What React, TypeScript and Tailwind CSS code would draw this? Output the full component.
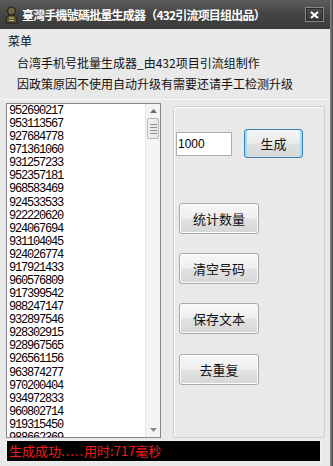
const numbers = [
  "952690217", "953113567", "927684778", "971361060", "931257233",
  "952357181", "968583469", "924533533", "922220620", "924067694",
  "931104045", "924026774", "917921433", "960576809", "917399542",
  "988247147", "932897546", "928302915", "928967565", "926561156",
  "963874277", "970200404", "934972833", "960802714", "919315450",
  "988662369",
];

const cjk = { fontFamily: '"Noto Sans CJK SC", "Liberation Sans", sans-serif' };

function WinButton({ label, top }: { label: string; top: string }) {
  return (
    <button
      className={`${top} ml-[5px] flex h-[31px] w-[80px] items-center justify-center rounded-[3px] border border-[#a9a9a9] bg-[linear-gradient(#f7f7f7_0%,#efefef_48%,#e2e2e2_52%,#d6d6d6_100%)] text-[13px] text-[#111] shadow-[inset_0_0_0_1px_#fcfcfc]`}
      style={cjk}
    >
      {label}
    </button>
  );
}

export default function App() {
  return (
    <div className="flex h-[466px] w-[333px] overflow-hidden bg-[#e9e9e9]">
      <div className="flex w-[330px] flex-col">
        {/* title bar */}
        <div className="flex h-[29px] items-center bg-[linear-gradient(#5c5c5c,#444_50%,#3a3a3a)] pl-[4px] pr-[6px]">
          <svg width="15" height="18" viewBox="0 0 15 18" className="shrink-0">
            <ellipse cx="7.5" cy="5" rx="4" ry="4" fill="#6b6440" stroke="#1e1c10" strokeWidth="1" />
            <path d="M2 17 C2 10 4 9 7.5 9 C11 9 13 10 13 17 Z" fill="#5d5636" stroke="#1e1c10" strokeWidth="1" />
            <path d="M5 12 L10 12 M5 14.5 L10 14.5" stroke="#c9c08a" strokeWidth="1" />
          </svg>
          <span className="ml-[3px] whitespace-nowrap text-[12px] font-bold tracking-[-0.8px] text-white" style={cjk}>
            臺灣手機號碼批量生成器（432引流项目组出品）
          </span>
          <div className="ml-auto flex h-[15px] w-[19px] items-center justify-center border border-[#888] bg-[linear-gradient(#4e4e4e,#363636)] shadow-[inset_0_0_0_1px_#2a2a2a]">
            <svg width="9" height="8" viewBox="0 0 9 8">
              <path d="M1 1 L8 7 M8 1 L1 7" stroke="#fff" strokeWidth="2" />
            </svg>
          </div>
        </div>

        {/* menu + info lines */}
        <div className="flex h-[70px] flex-col text-[12px] leading-[12px] text-[#111]" style={cjk}>
          <div className="ml-[8px] mt-[6px]">菜单</div>
          <div className="ml-[17px] mt-[10px]">台湾手机号批量生成器_由432项目引流组制作</div>
          <div className="ml-[17px] mt-[9px]">因政策原因不使用自动升级有需要还请手工检测升级</div>
        </div>
        <div className="h-px bg-[#f7f7f7]" />

        {/* main area */}
        <div className="mt-[3px] flex h-[336px]">
          {/* list box */}
          <div className="ml-[6px] flex h-[335px] w-[155px] border border-[#828790] bg-white">
            <div
              className="h-full flex-1 overflow-hidden pl-[2px] pt-[1px] text-[12px] leading-[13.08px] tracking-[-1.2px] text-black"
              style={{ fontFamily: '"Liberation Mono", "DejaVu Sans Mono", monospace' }}
            >
              {numbers.map((n, i) => (
                <div key={i}>{n}</div>
              ))}
            </div>
            {/* scrollbar */}
            <div className="flex w-[15px] flex-col border-l border-[#e6e6e6] bg-[#f4f4f4]">
              <div className="flex h-[14px] items-center justify-center">
                <svg width="7" height="4" viewBox="0 0 7 4">
                  <path d="M0 4 L3.5 0 L7 4 Z" fill="#6a6a6a" />
                </svg>
              </div>
              <div className="mx-[1px] flex h-[21px] flex-col items-center justify-center gap-[2px] rounded-[2px] border border-[#b8b8b8] bg-[linear-gradient(90deg,#f3f3f3,#e3e3e3)]">
                <div className="h-px w-[7px] bg-[#8f8f8f]" />
                <div className="h-px w-[7px] bg-[#8f8f8f]" />
                <div className="h-px w-[7px] bg-[#8f8f8f]" />
                <div className="h-px w-[7px] bg-[#8f8f8f]" />
              </div>
              <div className="mt-auto flex h-[14px] items-center justify-center">
                <svg width="7" height="4" viewBox="0 0 7 4">
                  <path d="M0 0 L3.5 4 L7 0 Z" fill="#8a8a8a" />
                </svg>
              </div>
            </div>
          </div>

          {/* group box */}
          <div className="ml-[12px] mt-[3px] flex h-[332px] w-[152px] flex-col rounded-[2px] border border-[#d0d0d0] shadow-[inset_1px_1px_0_#fafafa]">
            <div className="mt-[22px] flex items-center">
              <div className="ml-[2px] flex h-[24px] w-[56px] items-center border border-[#abadb3] bg-white pl-[1px] text-[12px] text-black" style={{ fontFamily: '"Liberation Sans", sans-serif' }}>
                1000
              </div>
              <button
                className="ml-[12px] flex h-[29px] w-[59px] items-center justify-center rounded-[3px] border border-[#3c7fb1] bg-[linear-gradient(#eaf6fd_0%,#d9f0fc_48%,#bee6fd_52%,#a7d9f5_100%)] text-[13px] text-[#111] shadow-[inset_0_0_0_2px_#9fdcfd]"
                style={cjk}
              >
                <span className="m-[2px] flex h-full w-full items-center justify-center rounded-[2px] bg-[linear-gradient(#f4f4f4_0%,#ececec_48%,#e0e0e0_52%,#d8d8d8_100%)]">生成</span>
              </button>
            </div>
            <WinButton label="统计数量" top="mt-[45px]" />
            <WinButton label="清空号码" top="mt-[19px]" />
            <WinButton label="保存文本" top="mt-[19px]" />
            <WinButton label="去重复" top="mt-[20px]" />
          </div>
        </div>

        {/* status bar */}
        <div className="ml-[6px] mt-[1px] flex h-[22px] w-[315px] items-center border border-[#f0f0f0] bg-black pl-[2px] text-[13px] text-[#f01c1c]" style={cjk}>
          生成成功<span className="tracking-[1px]">.....</span>用时:717毫秒
        </div>
      </div>
      <div className="w-[3px] bg-[linear-gradient(90deg,#8a8a8a,#4a4a4a)]" />
    </div>
  );
}
